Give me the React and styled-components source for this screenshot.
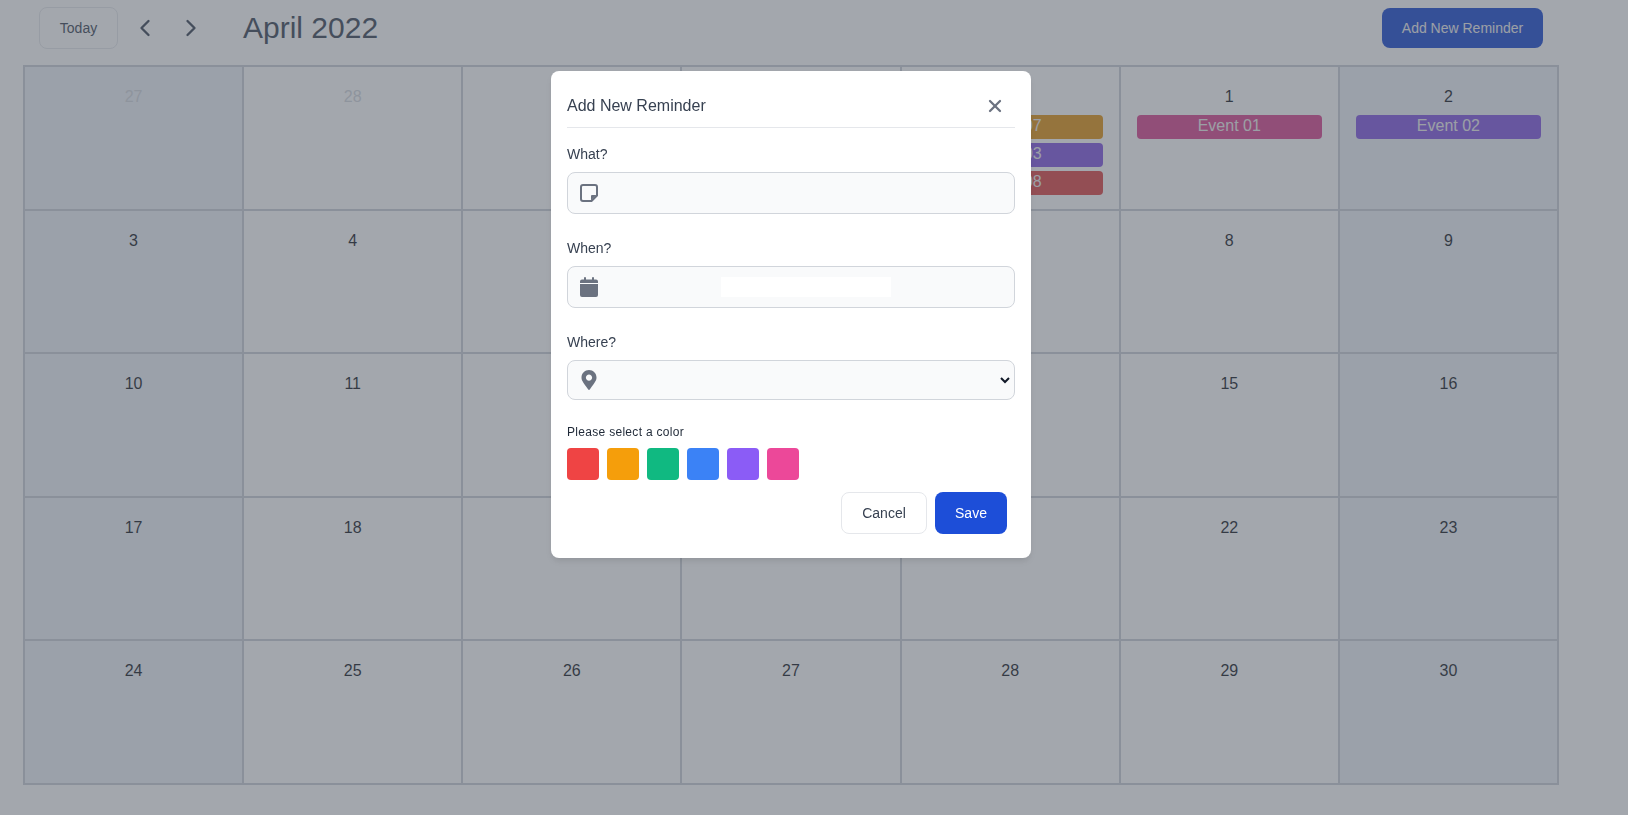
import React from 'react';
import styled, { createGlobalStyle } from 'styled-components';
import { ChevronLeft, ChevronRight, X } from 'lucide-react';
import { FaMapMarkerAlt } from 'react-icons/fa';

const GlobalStyle = createGlobalStyle`
  * { box-sizing: border-box; }
  body {
    margin: 0;
    background: #fff;
    color: #1f2937;
    font-family: "Liberation Sans", Arial, sans-serif;
  }
`;

const Page = styled.div`
  height: 815px;
  overflow: hidden;
`;

const Toolbar = styled.header`
  display: flex;
  align-items: flex-start;
  justify-content: space-between;
  height: 65px;
  padding: 7px 85px 0 39px;
`;

const ToolbarGroup = styled.div`
  display: flex;
  align-items: center;
  height: 42px;
`;

const TodayButton = styled.button`
  width: 79px;
  height: 42px;
  border: 1px solid #e5e7eb;
  border-radius: 8px;
  background: #fff;
  color: #2f3a4d;
  font: 14px "Liberation Sans", Arial, sans-serif;
`;

const NavButton = styled.button`
  display: flex;
  align-items: center;
  justify-content: center;
  width: 46px;
  height: 42px;
  padding: 0;
  margin-left: ${(p) => (p.$first ? '4px' : '0')};
  border: 0;
  background: none;
  color: #2f3a4d;
`;

const MonthTitle = styled.h1`
  margin: 0 0 0 29px;
  color: #2f3a4d;
  font-size: 30px;
  font-weight: 400;
`;

const AddButton = styled.button`
  width: 161px;
  height: 40px;
  margin-top: 1px;
  border: 0;
  border-radius: 8px;
  background: #0d3fcf;
  color: #eee;
  font: 14px "Liberation Sans", Arial, sans-serif;
`;

const Month = styled.div`
  display: grid;
  grid-template-columns: repeat(7, 1fr);
  grid-auto-rows: 143.6px;
  width: 1536px;
  margin-left: 23px;
  border-top: 2px solid #c8cdd4;
  border-left: 2px solid #c8cdd4;
`;

const Day = styled.div`
  display: flex;
  flex-direction: column;
  gap: 4px;
  padding: 18px 16px 0;
  border-right: 2px solid #c8cdd4;
  border-bottom: 2px solid #c8cdd4;
  background: ${(p) => (p.$weekend ? '#edf1f8' : '#fff')};
`;

const DayNumber = styled.div`
  margin-bottom: 2px;
  color: ${(p) => (p.$muted ? '#d1d5db' : '#0b0f17')};
  font-size: 16px;
  line-height: 24px;
  text-align: center;
`;

const EventTag = styled.div`
  height: 24px;
  border-radius: 4px;
  background: ${(p) => p.$color};
  color: #eee;
  font-size: 16px;
  line-height: 22px;
  text-align: center;
`;

const Overlay = styled.div`
  position: fixed;
  inset: 0;
  display: flex;
  align-items: flex-start;
  justify-content: center;
  padding: 71px 46px 0 0;
  background: rgba(88, 95, 106, 0.55);
`;

const Modal = styled.form`
  width: 480px;
  padding: 24px 16px;
  border-radius: 8px;
  background: #fff;
  box-shadow: 0 4px 6px -1px rgba(0, 0, 0, 0.1);
`;

const ModalHeader = styled.div`
  display: flex;
  align-items: center;
  justify-content: space-between;
  height: 33px;
  margin-bottom: 16px;
  padding-bottom: 11px;
  border-bottom: 1px solid #e5e7eb;
`;

const ModalTitle = styled.h2`
  margin: 0;
  color: #374151;
  font-size: 16px;
  font-weight: 400;
  line-height: 22px;
`;

const CloseButton = styled.button`
  display: flex;
  width: 20px;
  height: 20px;
  margin-right: 10px;
  padding: 0;
  border: 0;
  background: none;
  color: #6b7280;
`;

const Field = styled.div`
  margin-bottom: 24px;
`;

const Label = styled.label`
  display: block;
  margin-bottom: 8px;
  color: #374151;
  font-size: 14px;
  line-height: 20px;
`;

const InputBox = styled.div`
  display: flex;
  align-items: center;
  height: ${(p) => p.$height || '42px'};
  padding-left: 12px;
  border: 1px solid #d1d5db;
  border-radius: 8px;
  background: #f9fafb;
  color: #6b7280;
`;

const TextInput = styled.input`
  flex: 1;
  min-width: 0;
  height: 100%;
  border: 0;
  outline: 0;
  background: transparent;
`;

const DateSlot = styled.div`
  display: flex;
  flex: 1;
  justify-content: center;
`;

const DateInput = styled.div`
  width: 170px;
  height: 20px;
  background: #fff;
`;

const PinIcon = styled(FaMapMarkerAlt)`
  margin-left: -1px;
`;

const Select = styled.select`
  flex: 1;
  height: 100%;
  margin-right: 1px;
  border: 0;
  outline: 0;
  background: transparent;
  color: #111827;
`;

const ColorLabel = styled.div`
  margin-bottom: 8px;
  color: #1f2937;
  font-size: 12px;
  line-height: 16px;
  letter-spacing: 0.3px;
`;

const Swatches = styled.div`
  display: flex;
  gap: 8px;
  margin-bottom: 12px;
`;

const Swatch = styled.button`
  width: 32px;
  height: 32px;
  padding: 0;
  border: 0;
  border-radius: 4px;
  background: ${(p) => p.$color};
`;

const ModalActions = styled.div`
  display: flex;
  justify-content: flex-end;
  gap: 8px;
  padding-right: 8px;
`;

const CancelButton = styled.button`
  width: 86px;
  height: 42px;
  border: 1px solid #e5e7eb;
  border-radius: 8px;
  background: #fff;
  color: #374151;
  font: 14px "Liberation Sans", Arial, sans-serif;
`;

const SaveButton = styled.button`
  width: 72px;
  height: 42px;
  border: 0;
  border-radius: 8px;
  background: #1d4ed8;
  color: #fff;
  font: 14px "Liberation Sans", Arial, sans-serif;
`;

const NoteIcon = () => (
  <svg width="18" height="18" viewBox="0 0 18 18" fill="none">
    <path
      d="M3 1h12a2 2 0 0 1 2 2V11.500L11.500 17H3a2 2 0 0 1-2-2V3a2 2 0 0 1 2-2Z"
      stroke="currentColor"
      strokeWidth="2"
      strokeLinejoin="round"
    />
    <path d="M11 16.500V12a1 1 0 0 1 1-1H16.500Z" fill="currentColor" />
  </svg>
);

const CalendarIcon = () => (
  <svg width="18" height="20" viewBox="0 0 18 20" fill="currentColor">
    <path d="M4 1a1 1 0 0 1 2 0v1.500h6V1a1 1 0 0 1 2 0v1.500h2a2 2 0 0 1 2 2V6H0V4.500a2 2 0 0 1 2-2h2Z" />
    <path d="M0 7h18v11a2 2 0 0 1-2 2H2a2 2 0 0 1-2-2Z" />
  </svg>
);

const swatchColors = ['#ef4444', '#f59e0b', '#10b981', '#3b82f6', '#8b5cf6', '#ec4899'];

// the tags sit under the overlay, a touch deeper than the swatches
const tagColors = {
  amber: '#e08f08',
  purple: '#7a4de0',
  red: '#dc3a3a',
  pink: '#d83a8a',
};

const events = {
  31: [
    { title: 'Event 07', color: tagColors.amber },
    { title: 'Event 03', color: tagColors.purple },
    { title: 'Event 08', color: tagColors.red },
  ],
  1: [{ title: 'Event 01', color: tagColors.pink }],
  2: [{ title: 'Event 02', color: tagColors.purple }],
};

const days = [27, 28, 29, 30, 31].map((n) => ({ n, muted: n < 29 }));
for (let n = 1; n <= 30; n += 1) days.push({ n, muted: false });

const App = () => (
  <Page>
    <GlobalStyle />
    <Toolbar>
      <ToolbarGroup>
        <TodayButton type="button">Today</TodayButton>
        <NavButton type="button" $first><ChevronLeft size={28} /></NavButton>
        <NavButton type="button"><ChevronRight size={28} /></NavButton>
        <MonthTitle>April 2022</MonthTitle>
      </ToolbarGroup>
      <AddButton type="button">Add New Reminder</AddButton>
    </Toolbar>
    <Month>
      {days.map((day, i) => (
        <Day key={i} $weekend={i % 7 === 0 || i % 7 === 6}>
          <DayNumber $muted={day.muted}>{day.n}</DayNumber>
          {i < 7 && (events[day.n] || []).map((e) => (
            <EventTag key={e.title} $color={e.color}>{e.title}</EventTag>
          ))}
        </Day>
      ))}
    </Month>
    <Overlay>
      <Modal>
        <ModalHeader>
          <ModalTitle>Add New Reminder</ModalTitle>
          <CloseButton type="button"><X size={20} strokeWidth={2.75} /></CloseButton>
        </ModalHeader>
        <Field>
          <Label>What?</Label>
          <InputBox>
            <NoteIcon />
            <TextInput type="text" />
          </InputBox>
        </Field>
        <Field>
          <Label>When?</Label>
          <InputBox>
            <CalendarIcon />
            <DateSlot><DateInput /></DateSlot>
          </InputBox>
        </Field>
        <Field>
          <Label>Where?</Label>
          <InputBox $height="40px">
            <PinIcon size={20} />
            <Select><option value="" /></Select>
          </InputBox>
        </Field>
        <ColorLabel>Please select a color</ColorLabel>
        <Swatches>
          {swatchColors.map((c) => (
            <Swatch key={c} type="button" $color={c} />
          ))}
        </Swatches>
        <ModalActions>
          <CancelButton type="button">Cancel</CancelButton>
          <SaveButton type="button">Save</SaveButton>
        </ModalActions>
      </Modal>
    </Overlay>
  </Page>
);

export default App;
